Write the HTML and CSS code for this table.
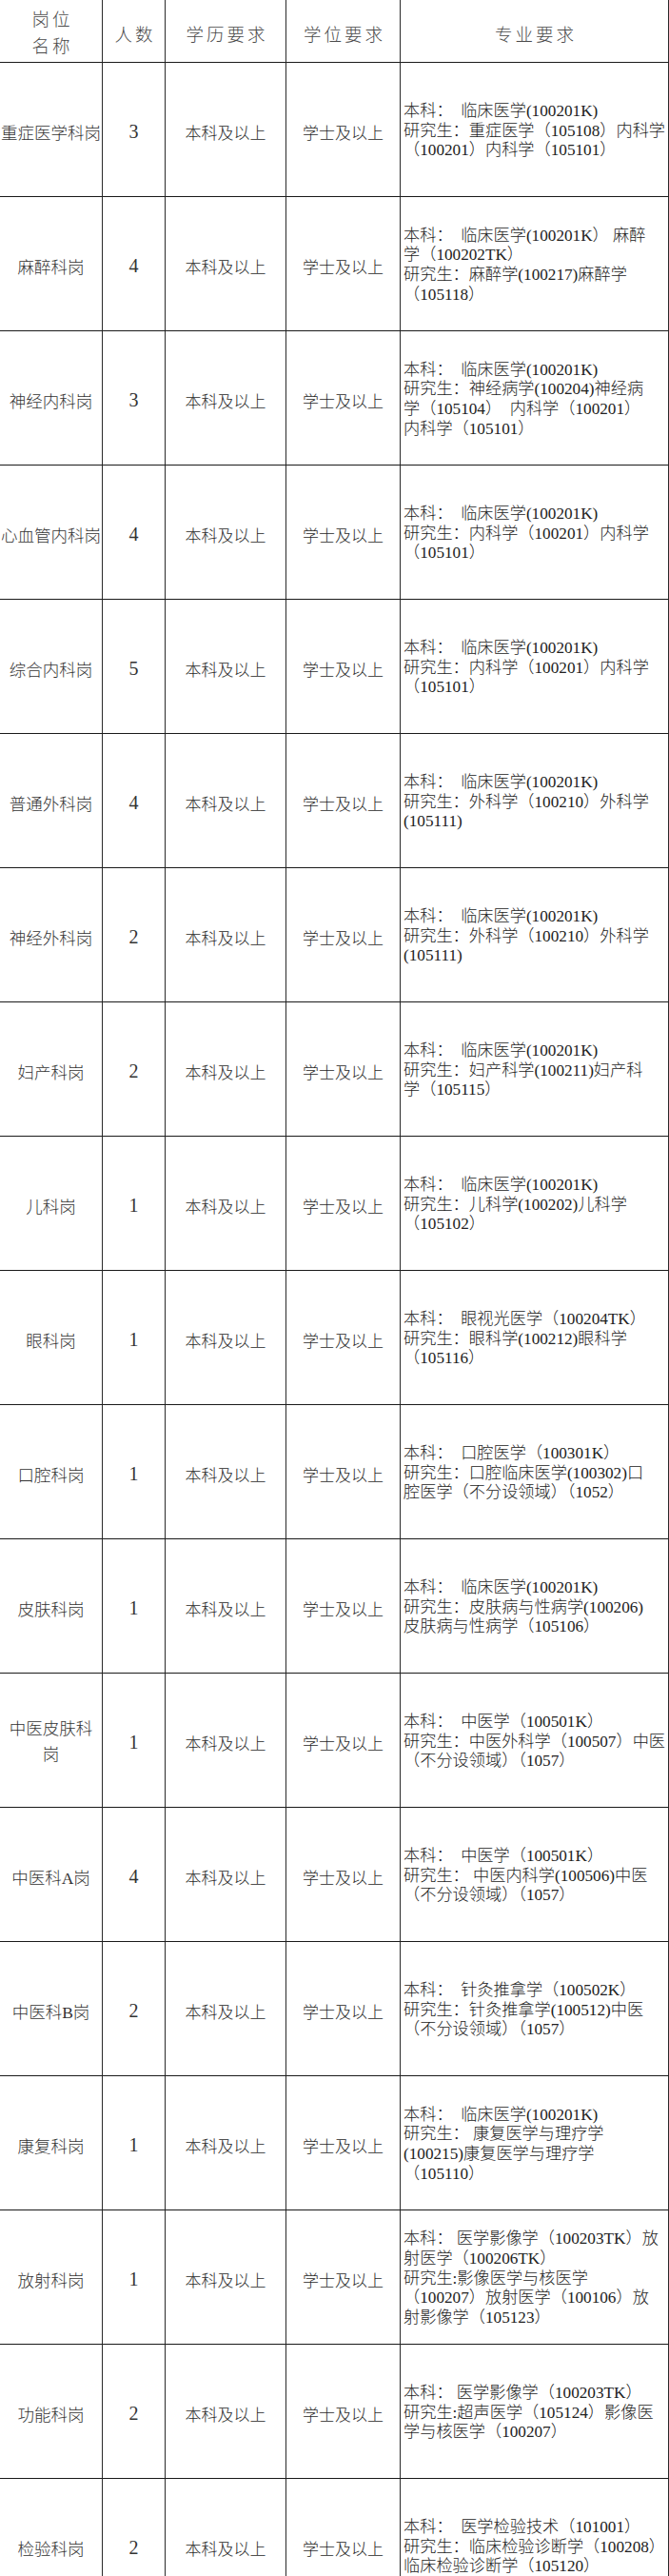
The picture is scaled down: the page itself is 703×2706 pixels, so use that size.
FILE: index.html
```html
<!DOCTYPE html>
<html lang="zh-CN">
<head>
<meta charset="utf-8">
<title>岗位表</title>
<link rel="stylesheet" href="styles.css">
</head>
<body>
<div class="page">
  <div class="grid">
    <div class="hd c1"><span class="hd-two">岗位<br>名称</span></div>
    <div class="hd c2">人数</div>
    <div class="hd c3">学历要求</div>
    <div class="hd c4">学位要求</div>
    <div class="hd c5">专业要求</div>

    <div class="cell name">重症医学科岗</div><div class="cell num">3</div><div class="cell edu">本科及以上</div><div class="cell edu">学士及以上</div>
    <div class="cell major"><div>本科：　临床医学(100201K)<br>研究生：重症医学（105108）内科学<br>（100201）内科学（105101）</div></div>

    <div class="cell name">麻醉科岗</div><div class="cell num">4</div><div class="cell edu">本科及以上</div><div class="cell edu">学士及以上</div>
    <div class="cell major"><div>本科：　临床医学(100201K） 麻醉<br>学（100202TK）<br>研究生：麻醉学(100217)麻醉学<br>（105118）</div></div>

    <div class="cell name">神经内科岗</div><div class="cell num">3</div><div class="cell edu">本科及以上</div><div class="cell edu">学士及以上</div>
    <div class="cell major"><div>本科：　临床医学(100201K)<br>研究生：神经病学(100204)神经病<br>学（105104）　内科学（100201）<br>内科学（105101）</div></div>

    <div class="cell name">心血管内科岗</div><div class="cell num">4</div><div class="cell edu">本科及以上</div><div class="cell edu">学士及以上</div>
    <div class="cell major"><div>本科：　临床医学(100201K)<br>研究生：内科学（100201）内科学<br>（105101）</div></div>

    <div class="cell name">综合内科岗</div><div class="cell num">5</div><div class="cell edu">本科及以上</div><div class="cell edu">学士及以上</div>
    <div class="cell major"><div>本科：　临床医学(100201K)<br>研究生：内科学（100201）内科学<br>（105101）</div></div>

    <div class="cell name">普通外科岗</div><div class="cell num">4</div><div class="cell edu">本科及以上</div><div class="cell edu">学士及以上</div>
    <div class="cell major"><div>本科：　临床医学(100201K)<br>研究生：外科学（100210）外科学<br>(105111)</div></div>

    <div class="cell name">神经外科岗</div><div class="cell num">2</div><div class="cell edu">本科及以上</div><div class="cell edu">学士及以上</div>
    <div class="cell major"><div>本科：　临床医学(100201K)<br>研究生：外科学（100210）外科学<br>(105111)</div></div>

    <div class="cell name">妇产科岗</div><div class="cell num">2</div><div class="cell edu">本科及以上</div><div class="cell edu">学士及以上</div>
    <div class="cell major"><div>本科：　临床医学(100201K)<br>研究生：妇产科学(100211)妇产科<br>学（105115）</div></div>

    <div class="cell name">儿科岗</div><div class="cell num">1</div><div class="cell edu">本科及以上</div><div class="cell edu">学士及以上</div>
    <div class="cell major"><div>本科：　临床医学(100201K)<br>研究生：儿科学(100202)儿科学<br>（105102）</div></div>

    <div class="cell name">眼科岗</div><div class="cell num">1</div><div class="cell edu">本科及以上</div><div class="cell edu">学士及以上</div>
    <div class="cell major"><div>本科：　眼视光医学（100204TK）<br>研究生：眼科学(100212)眼科学<br>（105116）</div></div>

    <div class="cell name">口腔科岗</div><div class="cell num">1</div><div class="cell edu">本科及以上</div><div class="cell edu">学士及以上</div>
    <div class="cell major"><div>本科：　口腔医学（100301K）<br>研究生：口腔临床医学(100302)口<br>腔医学（不分设领域）（1052）</div></div>

    <div class="cell name">皮肤科岗</div><div class="cell num">1</div><div class="cell edu">本科及以上</div><div class="cell edu">学士及以上</div>
    <div class="cell major"><div>本科：　临床医学(100201K)<br>研究生：皮肤病与性病学(100206)<br>皮肤病与性病学（105106）</div></div>

    <div class="cell name two">中医皮肤科<br>岗</div><div class="cell num">1</div><div class="cell edu">本科及以上</div><div class="cell edu">学士及以上</div>
    <div class="cell major"><div>本科：　中医学（100501K）<br>研究生：中医外科学（100507）中医<br>（不分设领域）（1057）</div></div>

    <div class="cell name">中医科A岗</div><div class="cell num">4</div><div class="cell edu">本科及以上</div><div class="cell edu">学士及以上</div>
    <div class="cell major"><div>本科：　中医学（100501K）<br>研究生： 中医内科学(100506)中医<br>（不分设领域）（1057）</div></div>

    <div class="cell name">中医科B岗</div><div class="cell num">2</div><div class="cell edu">本科及以上</div><div class="cell edu">学士及以上</div>
    <div class="cell major"><div>本科：　针灸推拿学（100502K）<br>研究生：针灸推拿学(100512)中医<br>（不分设领域）（1057）</div></div>

    <div class="cell name">康复科岗</div><div class="cell num">1</div><div class="cell edu">本科及以上</div><div class="cell edu">学士及以上</div>
    <div class="cell major"><div>本科：　临床医学(100201K)<br>研究生： 康复医学与理疗学<br>(100215)康复医学与理疗学<br>（105110）</div></div>

    <div class="cell name">放射科岗</div><div class="cell num">1</div><div class="cell edu">本科及以上</div><div class="cell edu">学士及以上</div>
    <div class="cell major"><div>本科： 医学影像学（100203TK）放<br>射医学（100206TK）<br>研究生:影像医学与核医学<br>（100207）放射医学（100106）放<br>射影像学（105123）</div></div>

    <div class="cell name">功能科岗</div><div class="cell num">2</div><div class="cell edu">本科及以上</div><div class="cell edu">学士及以上</div>
    <div class="cell major"><div>本科： 医学影像学（100203TK）<br>研究生:超声医学（105124）影像医<br>学与核医学（100207）</div></div>

    <div class="cell name">检验科岗</div><div class="cell num">2</div><div class="cell edu">本科及以上</div><div class="cell edu">学士及以上</div>
    <div class="cell major"><div>本科：　医学检验技术（101001）<br>研究生：临床检验诊断学（100208）<br>临床检验诊断学（105120）</div></div>
  </div>
</div>
</body>
</html>
```

FILE: styles.css
```css
html, body {
  margin: 0;
  padding: 0;
  background: #ffffff;
}

.page {
  width: 703px;
  height: 2706px;
  overflow: hidden;
  font-family: "Liberation Serif", "Noto Sans CJK SC", serif;
  color: #222222;
}

.grid {
  display: grid;
  grid-template-columns: 108px 66px 127px 120px 282px;
  grid-template-rows: 66px;
  grid-auto-rows: 141px;
}

.hd,
.cell {
  box-sizing: border-box;
  border-right: 1px solid #2a2a2a;
  border-bottom: 1px solid #1a1a1a;
  display: flex;
  align-items: center;
  justify-content: center;
  text-align: center;
  white-space: nowrap;
}

.hd {
  font-size: 18.5px;
  letter-spacing: 3px;
  color: #4a4a4a;
  padding-top: 4px;
  padding-left: 3px;
  font-weight: 300;
}

.hd-two {
  line-height: 28px;
}

.cell {
  padding-top: 4px;
  font-weight: 300;
}

.name {
  font-size: 17.5px;
  color: #333333;
}

.name.two {
  line-height: 27px;
}

.num {
  font-size: 20px;
  color: #333333;
}

.edu {
  font-size: 17px;
  color: #2a2a2a;
}

.major {
  justify-content: flex-start;
  text-align: left;
  padding-left: 3px;
  font-size: 17.2px;
  line-height: 20.7px;
  color: #222222;
}
```
